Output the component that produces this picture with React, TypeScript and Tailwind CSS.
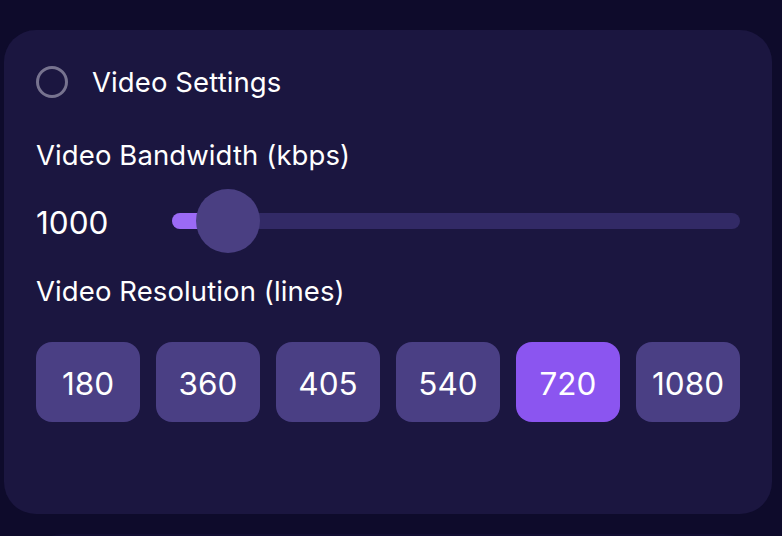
import { useState } from "react";

const resolutions = [180, 360, 405, 540, 720, 1080];

export default function App() {
  const [selected, setSelected] = useState(720);
  const [bandwidth] = useState(1000);

  return (
    <div
      className="h-[536px] w-[782px] overflow-hidden bg-[#0e0b2b] pt-[30px] pl-[4px]"
      style={{ fontFamily: "Inter, 'Noto Sans', sans-serif" }}
    >
      <div className="h-[484px] w-[768px] rounded-[32px] bg-[#1b1640] px-[32px] pt-[36px] text-white">
        {/* Header */}
        <div className="flex items-center gap-[24px]">
          <div className="h-[32px] w-[32px] rounded-full border-[3px] border-[#77738f]" />
          <span className="text-[27.5px] leading-[32px] tracking-[0.1px]">
            Video Settings
          </span>
        </div>

        {/* Bandwidth */}
        <div className="mt-[41px] text-[27.5px] leading-[32px] tracking-[0.1px]">
          Video Bandwidth (kbps)
        </div>
        <div className="mt-[18px] flex h-[64px] items-center">
          <span className="w-[136px] pt-[4px] text-[31.5px] leading-[32px]">
            {bandwidth}
          </span>
          <div className="relative h-[16px] flex-1 rounded-full bg-[#322a66]">
            <div className="absolute left-0 top-0 h-full w-[56px] rounded-full bg-[#9b6af5]" />
            <div className="absolute left-[24px] top-[-24px] h-[64px] w-[64px] rounded-full bg-[#4a3f82]" />
          </div>
        </div>

        {/* Resolution */}
        <div className="mt-[22px] text-[27.5px] leading-[32px] tracking-[0.1px]">
          Video Resolution (lines)
        </div>
        <div className="mt-[35px] flex gap-[16px]">
          {resolutions.map((r) => (
            <button
              key={r}
              onClick={() => setSelected(r)}
              className={`flex h-[80px] w-[104px] items-center justify-center rounded-[16px] pt-[3px] text-[31.5px] ${
                selected === r ? "bg-[#8b55f0]" : "bg-[#4a3f84]"
              }`}
            >
              {r}
            </button>
          ))}
        </div>
      </div>
      <div className="mx-[26px] mt-[20px] h-[40px] rounded-t-[32px] bg-[#120e33]" />
    </div>
  );
}
